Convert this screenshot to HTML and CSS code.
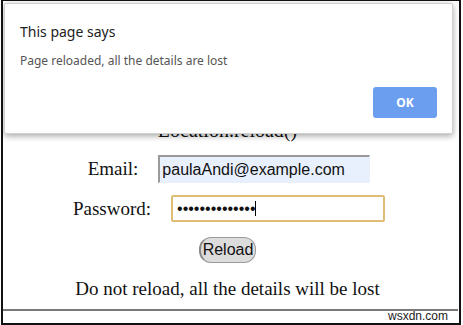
FILE: index.html
```html
<!DOCTYPE html>
<html>

<head>
    <title>Location.reload()</title>
    <link rel="stylesheet" href="styles.css">
</head>

<body>
    <div class="frame">
        <div class="page">
            <div class="page-title">Location.reload()</div>

            <div class="form-row email-row">
                <label for="email">Email:</label>
                <input type="text" id="email" class="email-input" value="paulaAndi@example.com">
            </div>

            <div class="form-row password-row">
                <label for="password">Password:</label>
                <div class="password-wrap">
                    <input type="password" id="password" class="password-input" value="paulaAndi12345">
                    <span class="caret"></span>
                </div>
            </div>

            <button class="reload-btn">Reload</button>

            <p class="warning">Do not reload, all the details will be lost</p>
        </div>

        <div class="page-rule"></div>
        <div class="watermark">wsxdn.com</div>

        <!-- browser alert on top of the page -->
        <div class="dialog">
            <div class="dialog-title">This page says</div>
            <div class="dialog-message">Page reloaded, all the details are lost</div>
            <button class="dialog-ok">OK</button>
        </div>
    </div>
</body>

</html>
```

FILE: styles.css
```css
body {
    margin: 0;
    background: #fff;
    font-family: 'Liberation Serif', 'Times New Roman', serif;
}

.frame {
    position: relative;
    width: 460px;
    height: 325px;
    margin-left: 1px;
    box-sizing: border-box;
    border: 2px solid #111;
    border-top-width: 1px;
    overflow: hidden;
}

.page {
    display: flex;
    flex-direction: column;
    align-items: center;
    padding-top: 118px;
    padding-right: 7px;
    color: #111;
    font-size: 19px;
}

.page-title {
    font-size: 20px;
    line-height: 22px;
}

.form-row {
    display: flex;
    align-items: center;
    gap: 20px;
}

.email-row {
    margin-top: 14px;
    padding-left: 3px;
}

.password-row {
    margin-top: 12px;
    padding-left: 3px;
}

.form-row label {
    line-height: 22px;
}

.email-input,
.password-input {
    font-family: 'Liberation Sans', Arial, sans-serif;
    font-size: 16px;
    color: #111;
    box-sizing: border-box;
    outline: none;
}

.email-input {
    width: 212px;
    height: 28px;
    padding: 0 0 0 2px;
    background: #e8f0fe;
    border: none;
    border-top: 2px solid #9a9a9a;
    border-left: 2px solid #9a9a9a;
    border-right: 1px solid #e8f0fe;
    border-bottom: 1px solid #e8f0fe;
}

.password-wrap {
    position: relative;
}

.password-input {
    width: 214px;
    height: 27px;
    padding: 0 0 0 4px;
    background: #fff;
    border: 2px solid #dfbd74;
    border-radius: 2px;
}

.caret {
    position: absolute;
    left: 84px;
    top: 6px;
    width: 1px;
    height: 15px;
    background: #000;
}

.reload-btn {
    margin-top: 15px;
    height: 26px;
    padding: 0 2px;
    font-family: 'Liberation Sans', Arial, sans-serif;
    font-size: 16px;
    color: #111;
    background: #dcdcdc;
    border: 1px solid #9a9a9a;
    border-left: 2px solid #888;
    border-radius: 12px;
}

.warning {
    margin: 15px 0 0 0;
    line-height: 22px;
}

.page-rule {
    position: absolute;
    left: -2px;
    top: 308px;
    width: 457px;
    height: 2px;
    background: #7a7a7a;
}

.watermark {
    position: absolute;
    right: 11px;
    top: 308px;
    font-family: 'Liberation Sans', Arial, sans-serif;
    font-size: 12px;
    color: #222;
}

/* Alert dialog */
.dialog {
    position: absolute;
    left: 1px;
    top: 2px;
    width: 449px;
    height: 131px;
    box-sizing: border-box;
    padding: 18px 15px 0 15px;
    background: #fff;
    border: 1px solid #d0d0d0;
    border-radius: 2px;
    box-shadow: 0 2px 6px rgba(0, 0, 0, 0.35);
    font-family: 'Noto Sans', 'Open Sans', sans-serif;
}

.dialog-title {
    font-size: 14px;
    color: #222;
}

.dialog-message {
    margin-top: 11px;
    font-size: 12px;
    color: #555;
}

.dialog-ok {
    position: absolute;
    right: 15px;
    bottom: 15px;
    width: 64px;
    height: 31px;
    background: #6c9ef0;
    color: #fff;
    border: none;
    border-radius: 3px;
    font-family: 'Noto Sans', 'Open Sans', sans-serif;
    font-size: 12px;
    font-weight: bold;
}
```
